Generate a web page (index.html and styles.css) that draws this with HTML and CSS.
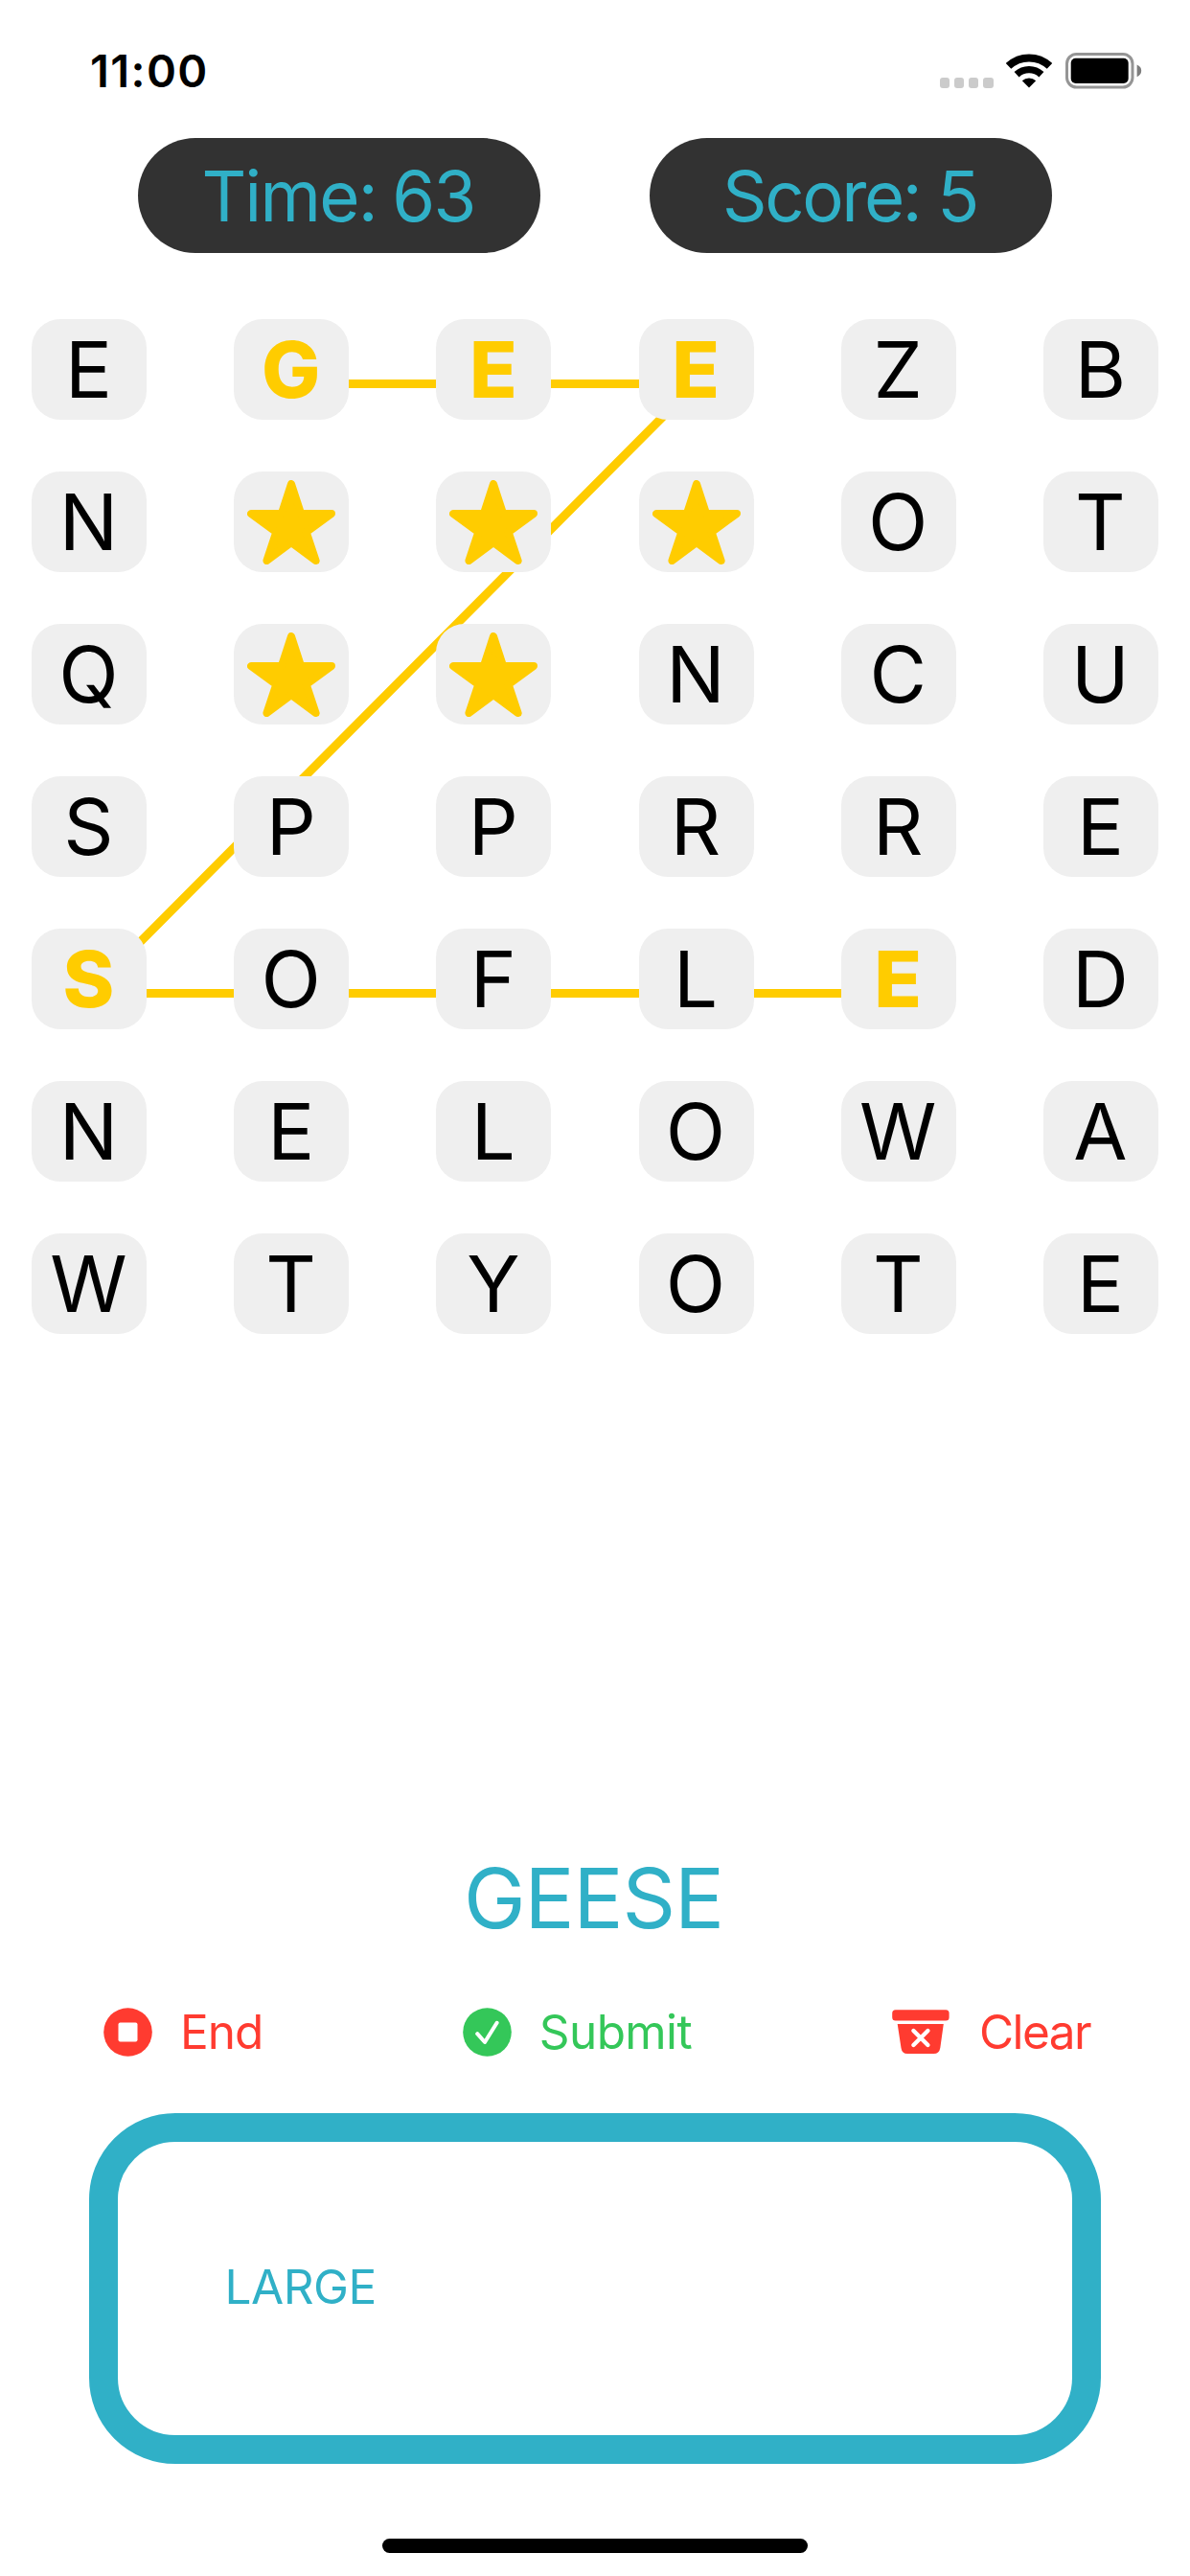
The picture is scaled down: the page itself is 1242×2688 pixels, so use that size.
FILE: index.html
```html
<!DOCTYPE html>
<html lang="en">
<head>
<meta charset="utf-8">
<title>Word Search</title>
<link rel="stylesheet" href="styles.css">
</head>
<body>
<svg class="defs" width="0" height="0" aria-hidden="true">
  <symbol id="star" viewBox="0 0 92 88">
    <polygon points="46,4 56.1,35 88,35 61.7,54.2 71.6,84 46,65 20.4,84 30.3,54.2 4,35 35.9,35" fill="#ffcc00" stroke="#ffcc00" stroke-width="8" stroke-linejoin="round"/>
  </symbol>
</svg>
<div class="screen">
  <header class="status">
    <span class="clock">11:00</span>
    <div class="indicators">
      <div class="cell"><i></i><i></i><i></i><i></i></div>
      <svg class="wifi" width="48" height="36" viewBox="0 0 48 36">
        <g fill="none" stroke="#000">
          <path d="M2.54 12.86A31.4 31.4 0 0 1 45.46 12.86" stroke-width="8"/>
          <path d="M11.08 21.69A19.1 19.1 0 0 1 36.92 21.69" stroke-width="7.4"/>
        </g>
        <path d="M24 35.6L16.8 28.3A10.4 10.4 0 0 1 31.2 28.3Z"/>
      </svg>
      <svg class="battery" width="80" height="38" viewBox="0 0 80 38">
        <rect x="1.5" y="1.5" width="68.5" height="34.5" rx="10" fill="none" stroke="#959595" stroke-width="3"/>
        <rect x="5.7" y="5.7" width="60" height="26.2" rx="5" fill="#000"/>
        <path d="M74.6 12.4Q79.2 14.4 79.2 18.8T74.6 25.2Z" fill="#7d7d7d"/>
      </svg>
    </div>
  </header>

  <div class="counters">
    <div class="pill time">Time: 63</div>
    <div class="pill score">Score: 5</div>
  </div>

  <main class="board">
    <svg class="trail" width="1242" height="1059" viewBox="0 0 1242 1059">
      <path d="M304.2 67.5H726L93 703.5H937.8" fill="none" stroke="#ffcc00" stroke-width="9"/>
    </svg>
    <div class="tile">E</div><div class="tile on">G</div><div class="tile on">E</div><div class="tile on">E</div><div class="tile">Z</div><div class="tile">B</div>
    <div class="tile">N</div><div class="tile found"><svg><use href="#star"/></svg></div><div class="tile found"><svg><use href="#star"/></svg></div><div class="tile found"><svg><use href="#star"/></svg></div><div class="tile">O</div><div class="tile">T</div>
    <div class="tile">Q</div><div class="tile found"><svg><use href="#star"/></svg></div><div class="tile found"><svg><use href="#star"/></svg></div><div class="tile">N</div><div class="tile">C</div><div class="tile">U</div>
    <div class="tile">S</div><div class="tile">P</div><div class="tile">P</div><div class="tile">R</div><div class="tile">R</div><div class="tile">E</div>
    <div class="tile on">S</div><div class="tile">O</div><div class="tile">F</div><div class="tile">L</div><div class="tile on">E</div><div class="tile">D</div>
    <div class="tile">N</div><div class="tile">E</div><div class="tile">L</div><div class="tile">O</div><div class="tile">W</div><div class="tile">A</div>
    <div class="tile">W</div><div class="tile">T</div><div class="tile">Y</div><div class="tile">O</div><div class="tile">T</div><div class="tile">E</div>
  </main>

  <div class="word">GEESE</div>

  <div class="actions">
    <div class="action end">
      <svg width="51" height="51" viewBox="0 0 51 51"><circle cx="25.5" cy="25.5" r="25.3" fill="currentColor"/><rect x="15.5" y="15.5" width="20" height="20" rx="2" fill="#fff"/></svg>
      <span>End</span>
    </div>
    <div class="action submit">
      <svg width="51" height="51" viewBox="0 0 51 51"><circle cx="25.5" cy="25.5" r="25.3" fill="currentColor"/><path d="M15.2 27.2L23 36L35.6 15.8" fill="none" stroke="#fff" stroke-width="4" stroke-linecap="round" stroke-linejoin="round"/></svg>
      <span>Submit</span>
    </div>
    <div class="action clear">
      <svg width="60" height="51" viewBox="0 0 60 51">
        <rect x="0.2" y="2.2" width="59.4" height="11.2" rx="3.5" fill="currentColor"/>
        <path d="M5.7 17H53.8L50.3 42Q49.3 48 43.5 48H16Q10.4 48 9.5 42Z" fill="currentColor"/>
        <path d="M22.4 24L37.4 39M37.4 24L22.4 39" stroke="#fff" stroke-width="4.4" stroke-linecap="round"/>
      </svg>
      <span>Clear</span>
    </div>
  </div>

  <section class="words"><span>LARGE</span></section>

  <div class="home"></div>
</div>
</body>
</html>
```
FILE: styles.css
```css
* { box-sizing: border-box; }

body {
  margin: 0;
  background: #fff;
  font-family: Inter, "Liberation Sans", sans-serif;
  color: #000;
}

.defs { position: absolute; }

.screen {
  display: flex;
  flex-direction: column;
  width: 1242px;
  height: 2688px;
  overflow: hidden;
}

/* Status bar */
.status {
  display: flex;
  justify-content: space-between;
  height: 144px;
  padding: 0 50px 0 94px;
}

.clock {
  height: 148px;
  line-height: 148px;
  font-size: 47px;
  font-weight: 570;
  letter-spacing: 1.4px;
}

.indicators {
  display: flex;
  align-items: flex-start;
  padding-top: 55px;
}

.cell {
  display: flex;
  gap: 4.5px;
  margin: 26px 13.5px 0 0;
}

.cell i {
  width: 10.6px;
  height: 10.6px;
  border-radius: 3px;
  background: #cbcbcb;
}

.wifi { margin: 0.5px 14px 0 0; }

/* Time and score */
.counters {
  display: flex;
  justify-content: center;
  gap: 114px;
}

.pill {
  width: 420px;
  height: 120px;
  padding-right: 2px;
  border-radius: 60px;
  background: #323232;
  color: #30b0c7;
  font-size: 72.5px;
  line-height: 121px;
  text-align: center;
}

.time { letter-spacing: -1.7px; word-spacing: -2.5px; }
.score { letter-spacing: -2.4px; }

/* Letter board */
.board {
  position: relative;
  display: grid;
  grid-template-columns: repeat(6, 120px);
  grid-auto-rows: 105px;
  row-gap: 54px;
  justify-content: space-between;
  margin-top: 69px;
  padding: 0 33px;
}

.trail {
  position: absolute;
  top: 0;
  left: 0;
}

.tile {
  position: relative;
  padding-right: 1px;
  border-radius: 30px;
  background: #efefef;
  font-size: 81.6px;
  line-height: 105px;
  text-align: center;
}

.on {
  color: #ffcc00;
  font-weight: 800;
}

.found {
  display: flex;
  padding: 9px 0 0 14px;
}

.found svg {
  width: 92px;
  height: 88px;
}

/* Current word */
.word {
  margin-top: 529px;
  padding-right: 3px;
  color: #30b0c7;
  font-size: 86.7px;
  line-height: 120px;
  letter-spacing: -1.1px;
  text-align: center;
}

/* Actions */
.actions {
  display: flex;
  justify-content: space-between;
  margin-top: 54px;
  padding: 0 104px 0 108px;
}

.action {
  display: flex;
  align-items: center;
  gap: 29px;
  font-size: 49.5px;
  line-height: 51px;
}

.end { color: #ff3b30; letter-spacing: -1px; }
.submit { color: #34c759; letter-spacing: -0.6px; }
.clear { color: #ff3b30; gap: 31.5px; letter-spacing: -1.6px; }

/* Found words */
.words {
  width: 1056px;
  height: 366px;
  margin: 58.5px 0 0 93px;
  padding: 118px 0 0 111.5px;
  border: 30px solid #30b0c7;
  border-radius: 90px;
  color: #30b0c7;
  font-size: 49.5px;
  line-height: 66px;
  letter-spacing: -0.5px;
}

.words span { display: block; }

.home {
  width: 444px;
  height: 15px;
  margin: 78px auto 0;
  border-radius: 7.5px;
  background: #000;
}
```
